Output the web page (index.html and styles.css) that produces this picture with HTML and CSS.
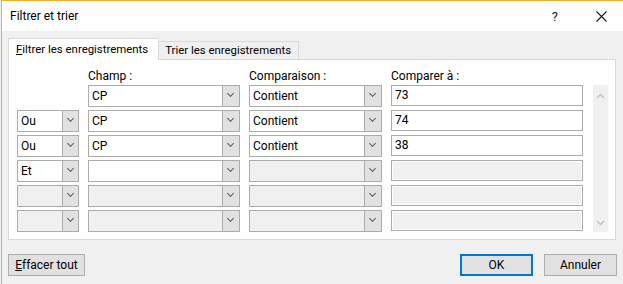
FILE: index.html
```html
<!DOCTYPE html>
<html lang="fr">
<head>
<meta charset="utf-8">
<title>Filtrer et trier</title>
<link rel="stylesheet" href="styles.css">
</head>
<body>
<div class="window">
  <div class="titlebar">
    <span class="title">Filtrer et trier</span>
    <div class="title-actions">
      <span class="help">?</span>
      <svg class="close" width="11" height="11" viewBox="0 0 11 11"><path d="M0.5 0.5L10.5 10.5M10.5 0.5L0.5 10.5" stroke="#1a1a1a" stroke-width="1.1" fill="none"/></svg>
    </div>
  </div>
  <div class="content">
    <div class="tabs">
      <div class="tab active"><u>F</u>iltrer les enregistrements</div>
      <div class="tab">Trier les enre<u>g</u>istrements</div>
    </div>
    <div class="panel">
      <div class="grid">
        <div class="hdr"></div>
        <div class="hdr">Champ :</div>
        <div class="hdr">Comparaison :</div>
        <div class="hdr">Comparer à :</div>
        <div class="hdr"></div>
        <div class="scroll">
          <svg width="9" height="6" viewBox="0 0 9 6"><path d="M1 5L4.5 1.5L8 5" stroke="#c2c2c2" stroke-width="1.4" fill="none"/></svg>
          <svg width="9" height="6" viewBox="0 0 9 6"><path d="M1 1L4.5 4.5L8 1" stroke="#c2c2c2" stroke-width="1.4" fill="none"/></svg>
        </div>

        <div class="cell-empty"></div>
        <div class="combo wide"><span class="val">CP</span><span class="arrow"></span></div>
        <div class="combo wide"><span class="val">Contient</span><span class="arrow"></span></div>
        <div class="input">73</div>

        <div class="combo"><span class="val">Ou</span><span class="arrow"></span></div>
        <div class="combo wide"><span class="val">CP</span><span class="arrow"></span></div>
        <div class="combo wide"><span class="val">Contient</span><span class="arrow"></span></div>
        <div class="input">74</div>

        <div class="combo"><span class="val">Ou</span><span class="arrow"></span></div>
        <div class="combo wide"><span class="val">CP</span><span class="arrow"></span></div>
        <div class="combo wide"><span class="val">Contient</span><span class="arrow"></span></div>
        <div class="input">38</div>

        <div class="combo"><span class="val">Et</span><span class="arrow"></span></div>
        <div class="combo wide"><span class="val"></span><span class="arrow"></span></div>
        <div class="combo wide disabled"><span class="val"></span><span class="arrow"></span></div>
        <div class="input disabled"></div>

        <div class="combo disabled"><span class="val"></span><span class="arrow"></span></div>
        <div class="combo wide disabled"><span class="val"></span><span class="arrow"></span></div>
        <div class="combo wide disabled"><span class="val"></span><span class="arrow"></span></div>
        <div class="input disabled"></div>

        <div class="combo disabled"><span class="val"></span><span class="arrow"></span></div>
        <div class="combo wide disabled"><span class="val"></span><span class="arrow"></span></div>
        <div class="combo wide disabled"><span class="val"></span><span class="arrow"></span></div>
        <div class="input disabled"></div>
      </div>
    </div>
    <div class="buttons">
      <button class="btn clear"><u>E</u>ffacer tout</button>
      <div class="right-buttons">
        <button class="btn ok">OK</button>
        <button class="btn">Annuler</button>
      </div>
    </div>
  </div>
</div>
</body>
</html>
```
FILE: styles.css
```css
* { box-sizing: border-box; }
html, body { margin: 0; padding: 0; }
body {
  background: #f0f0f0;
  font-family: Roboto, "Noto Sans", "Liberation Sans", sans-serif;
  font-size: 12px;
  color: #000;
  width: 623px;
  height: 284px;
  overflow: hidden;
}
.window {
  margin-left: 1px;
  border-top: 1px solid #f0b323;
  border-left: 1px solid #f0b323;
  height: 284px;
  background: #f0f0f0;
}
.titlebar {
  height: 30px;
  background: #fff;
  display: flex;
  align-items: center;
  justify-content: space-between;
  padding-left: 8px;
  font-size: 12px;
}
.title-actions {
  display: flex;
  align-items: center;
  gap: 38px;
  padding-right: 16px;
}
.help { font-size: 13px; color: #1a1a1a; }
.close { display: block; }
.content {
  padding: 7px 6px 0 6px;
}
.tabs {
  display: flex;
  align-items: flex-end;
  height: 21px;
  position: relative;
  z-index: 1;
  font-size: 11.4px;
}
.tab {
  height: 18px;
  padding: 0 7px 0 6px;
  border: 1px solid #d9d9d9;
  border-bottom: none;
  background: #f0f0f0;
  line-height: 17px;
  white-space: nowrap;
}
.tab.active {
  height: 22px;
  margin-bottom: -1px;
  background: #fff;
  border-right: none;
  padding: 0 10px 0 7px;
  line-height: 20px;
}
.panel {
  width: 608px;
  height: 181px;
  border: 1px solid #d9d9d9;
  background: #fff;
  padding: 8px 6px 0 8px;
}
.grid {
  display: grid;
  grid-template-columns: 62px 152px 133px 192px 16px;
  grid-template-rows: 14px repeat(6, 22px);
  column-gap: 9px;
  row-gap: 3px;
}
.hdr {
  line-height: 14px;
  align-self: start;
  margin-top: 1px;
}
.scroll {
  grid-column: 5;
  grid-row: 2 / span 6;
  margin-left: 1px;
  background: #f0f0f0;
  display: flex;
  flex-direction: column;
  justify-content: space-between;
  align-items: center;
  padding: 8px 0 6px;
}
.scroll svg { display: block; }
.combo {
  border: 1px solid #acacac;
  background: #fff;
  display: flex;
  height: 22px;
}
.combo .val {
  flex: 1;
  padding-left: 3px;
  line-height: 20px;
}
.combo .arrow {
  width: 17px;
  background: #e1e1e1;
  margin: -1px -1px -1px 0;
  border: 1px solid #acacac;
  position: relative;
}
.combo.wide .arrow { width: 18px; }
.combo .arrow::after {
  content: "";
  position: absolute;
  left: 5px;
  top: 5px;
  width: 4px;
  height: 4px;
  border-right: 1px solid #5a5a5a;
  border-bottom: 1px solid #5a5a5a;
  transform: rotate(45deg);
}
.combo.disabled { background: #f0f0f0; }
.input {
  height: 21px;
  border: 1px solid #acacac;
  background: #fff;
  padding-left: 3px;
  line-height: 19px;
  align-self: start;
}
.input.disabled {
  background: #f0f0f0;
  box-shadow: inset 0 0 0 1px #fff;
}
.buttons {
  display: flex;
  justify-content: space-between;
  margin-top: 14px;
}
.right-buttons {
  display: flex;
  gap: 11px;
}
.btn {
  font-family: inherit;
  font-size: 12px;
  height: 22px;
  width: 73px;
  border: 1px solid #adadad;
  background: #e1e1e1;
  color: #000;
  padding: 0;
  line-height: 18px;
}
.btn.clear { width: 77px; }
.btn.ok { border: 2px solid #0078d7; }
```
